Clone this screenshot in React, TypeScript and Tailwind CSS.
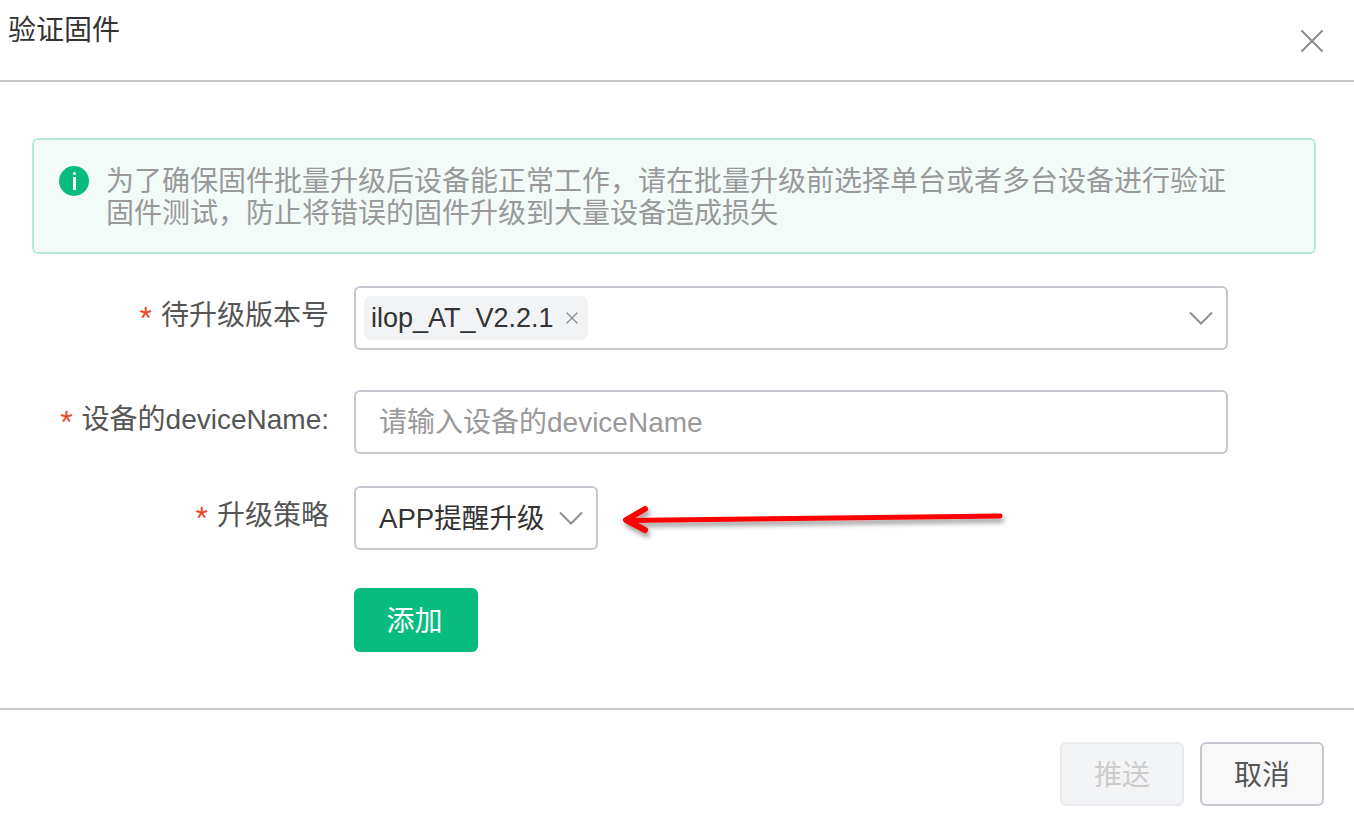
import { X } from 'lucide-react';

const font = "font-['Liberation_Sans','Noto_Sans_CJK_SC',sans-serif]";

function Label({ text }: { text: string }) {
    return (
        <div className="w-[329px] shrink-0 pb-[4px] flex items-center justify-end text-[28px] leading-[32px] text-[#555]">
            <span className="text-[#f1461f] mr-[9px] text-[32px] relative top-[2px]">*</span>
            <span className="whitespace-nowrap">{text}</span>
        </div>
    );
}

function Chevron() {
    return (
        <svg width="24" height="14" viewBox="0 0 24 14" fill="none" stroke="#8c8f93" strokeWidth="2">
            <path d="M1 1.5 L12 12.5 L23 1.5" />
        </svg>
    );
}

export default function App() {
    return (
        <div className={`relative w-[1354px] h-[824px] bg-white flex flex-col overflow-hidden ${font}`}>
            <div className="h-[82px] shrink-0 border-b-2 border-[#c4c7cb] flex justify-between pl-[8px] pr-[22px]">
                <div className="text-[28px] leading-[32px] pt-[15px] text-[#333]">验证固件</div>
                <X className="mt-[21px]" size={40} strokeWidth={1.2} color="#8a8c8f" />
            </div>

            <div className="flex-1 px-[32px] pt-[56px]">
                <div className="h-[116px] w-[1284px] border-2 border-[#b5e9da] rounded-[6px] bg-[#f3fbf9] flex pl-[25px] pt-[24px]">
                    <div className="w-[30px] h-[30px] rounded-full bg-[#08bc80] shrink-0 mt-[2px] flex flex-col items-center pt-[6px]">
                        <span className="w-[3px] h-[3px] bg-white rounded-full" />
                        <span className="w-[3px] h-[13px] bg-white mt-[2px]" />
                    </div>
                    <p className="ml-[17px] w-[1130px] text-[28px] leading-[32px] text-[#999] mt-[2px]">
                        为了确保固件批量升级后设备能正常工作，请在批量升级前选择单台或者多台设备进行验证固件测试，防止将错误的固件升级到大量设备造成损失
                    </p>
                </div>

                <div className="-ml-[32px] mt-[32px] flex">
                    <Label text="待升级版本号" />
                    <div className="ml-[25px] w-[874px] h-[64px] border-2 border-[#c4c7cf] rounded-[6px] flex items-center justify-between pl-[8px] pr-[13px]">
                        <div className="h-[44px] bg-[#f2f3f5] rounded-[6px] flex items-center pl-[7px] pr-[6px] text-[27px] text-[#333]">
                            ilop_AT_V2.2.1
                            <X className="ml-[8px]" size={20} strokeWidth={1.5} color="#8a8c8f" />
                        </div>
                        <Chevron />
                    </div>
                </div>

                <div className="-ml-[32px] mt-[40px] flex">
                    <Label text="设备的deviceName:" />
                    <div className="ml-[25px] w-[874px] h-[64px] border-2 border-[#c4c7cf] rounded-[6px] flex items-center pl-[23px] pt-[2px] text-[28px] text-[#999]">
                        请输入设备的deviceName
                    </div>
                </div>

                <div className="-ml-[32px] mt-[32px] flex">
                    <Label text="升级策略" />
                    <div className="ml-[25px] w-[244px] h-[64px] border-2 border-[#c4c7cf] rounded-[6px] flex items-center justify-between pl-[23px] pr-[13px] text-[27.6px] text-[#333]">
                        <span className="whitespace-nowrap pt-[2px]">APP提醒升级</span>
                        <Chevron />
                    </div>
                </div>

                <button className="block ml-[322px] mt-[38px] w-[124px] h-[64px] pt-[4px] pr-[3px] rounded-[6px] bg-[#08bc80] text-white text-[28px]">
                    添加
                </button>
            </div>

            <div className="h-[116px] shrink-0 border-t-2 border-[#c4c7cb] flex justify-end gap-[16px] pt-[32px] pr-[30px]">
                <button className="w-[124px] h-[64px] pt-[4px] rounded-[6px] border-2 border-[#e8e9ec] bg-[#f3f4f6] text-[28px] text-[#ccc]">
                    推送
                </button>
                <button className="w-[124px] h-[64px] pt-[4px] rounded-[6px] border-2 border-[#c4c7cf] bg-[#f8f8f8] text-[28px] text-[#555]">
                    取消
                </button>
            </div>

            {/* red annotation arrow on top of the page */}
            <svg className="absolute left-[610px] top-[495px]" width="410" height="50" viewBox="0 0 410 50" fill="none">
                <defs>
                    <filter id="arrowShadow" x="-5%" y="-50%" width="110%" height="200%">
                        <feDropShadow dx="2" dy="4" stdDeviation="2.5" floodColor="#000" floodOpacity="0.4" />
                    </filter>
                </defs>
                <g filter="url(#arrowShadow)" stroke="#ff0000" strokeLinecap="round" strokeLinejoin="round">
                    <path d="M17 25.5 L390 21" strokeWidth="5" />
                    <path d="M35 14 L16 25 L35 35" strokeWidth="6" />
                </g>
            </svg>
        </div>
    );
}
